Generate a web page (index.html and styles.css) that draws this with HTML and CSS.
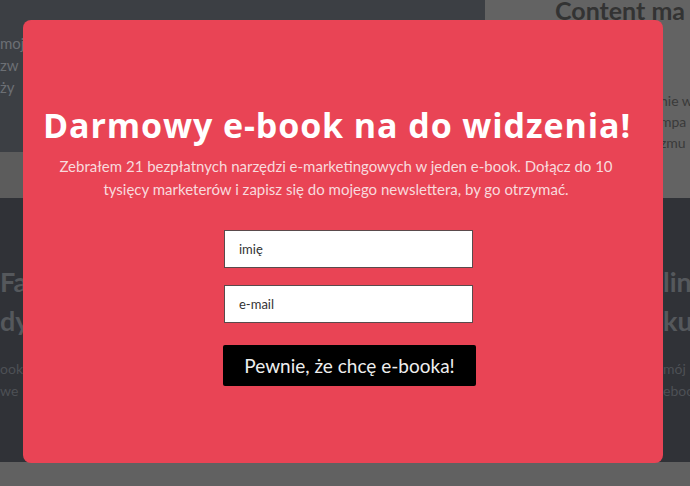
FILE: index.html
```html
<!DOCTYPE html>
<html lang="pl">
<head>
  <meta charset="UTF-8" />
  <meta name="viewport" content="width=device-width, initial-scale=1.0" />
  <title>Darmowy e-book</title>
  <link rel="stylesheet" href="styles.css">
</head>
<body>
  <div class="page">
    <div class="top">
      <div class="top-left">
        <div class="intro">
          <p>moje</p>
          <p>zw</p>
          <p>ży</p>
        </div>
        <div class="band"></div>
      </div>
      <div class="top-right">
        <h2>Content ma<br>wor</h2>
        <p>nie w</p>
        <p>mpa</p>
        <p>zmu</p>
      </div>
    </div>
    <div class="middle">
      <div class="col">
        <h3>Fa</h3>
        <h3>dy</h3>
        <p>ook</p>
        <p>we</p>
      </div>
      <div class="col col-right">
        <h3>lin</h3>
        <h3>ku</h3>
        <p>mój p</p>
        <p>eboo</p>
      </div>
    </div>
    <div class="bottom"></div>
  </div>

  <div class="modal">
    <h1>Darmowy e-book na do widzenia!</h1>
    <p class="lead">Zebrałem 21 bezpłatnych narzędzi e-marketingowych w jeden e-book. Dołącz do 10 tysięcy marketerów i zapisz się do mojego newslettera, by go otrzymać.</p>
    <form class="signup">
      <input type="text" placeholder="imię" />
      <input type="email" placeholder="e-mail" />
      <button type="button">Pewnie, że chcę e-booka!</button>
    </form>
  </div>
</body>
</html>
```

FILE: styles.css
```css
body { margin: 0; font-family: Lato, "Open Sans", sans-serif; background: #616161; overflow: hidden; }
.page { width: 690px; height: 486px; display: flex; flex-direction: column; }
.top { display: flex; height: 198px; }
.top-left { width: 485px; flex: none; display: flex; flex-direction: column; }
.intro { height: 152px; background: #3c3f44; padding: 36px 0 0 0; box-sizing: border-box; color: #6c6f74; font-size: 15px; }
.intro p { margin: 0 0 8px; line-height: 14px; }
.band { flex: 1; background: #5c5c5c; }
.top-right { flex: 1; min-width: 0; overflow: hidden; background: #636363; padding-left: 70px; color: #333; white-space: nowrap; }
.top-right h2 { margin: -12px 0 0; font-size: 25px; line-height: 44px; }
.top-right p { margin: 0 0 0 105px; font-size: 14px; line-height: 21px; color: #3a3a3a; }
.top-right h2 + p { margin-top: 14px; }
.middle { height: 264px; background: #303237; display: flex; justify-content: space-between; }
.col { padding-top: 64px; color: #55585c; }
.col h3 { margin: 0; font-size: 27px; line-height: 39px; }
.col p { margin: 0; font-size: 14px; line-height: 22px; color: #4d5055; }
.col h3 + p { margin-top: 18px; }
.col-right { width: 27px; overflow: hidden; white-space: nowrap; }
.bottom { flex: 1; background: #616161; }

.modal { position: absolute; left: 23px; top: 20px; width: 640px; height: 443px; box-sizing: border-box; background: #e94455; border-radius: 8px; padding-top: 84px; text-align: center; }
.modal h1 { margin: 0; padding-right: 12px; color: #fff; font-family: "Open Sans", sans-serif; font-size: 34px; letter-spacing: 0.9px; line-height: 42px; font-weight: 700; }
.lead { margin: 9px auto 0; width: 580px; padding-right: 14px; color: #f8dadd; font-size: 15px; line-height: 23px; }
.signup { width: 253px; margin: 29px 0 0 200px; display: flex; flex-direction: column; }
.signup input { height: 38px; box-sizing: border-box; border: 1px solid #5a4a4c; background: #fff; padding: 0 14px; font-family: Lato, sans-serif; font-size: 13px; color: #333; margin: 0 3px 17px 1px; outline: none; }
.signup input::placeholder { color: #333; }
.signup button { height: 41px; margin-top: 5px; background: #000; color: #eee; border: none; border-radius: 2px; font-family: Lato, sans-serif; font-size: 19px; cursor: pointer; }
```
